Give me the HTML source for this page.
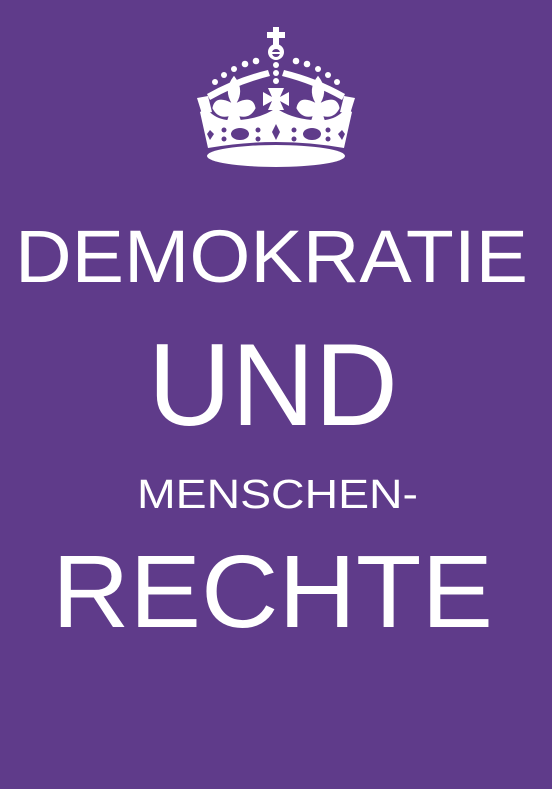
<!DOCTYPE html>
<html><head><meta charset="utf-8"><style>
html,body{margin:0;padding:0;background:#5f3b8a;}
svg{display:block}
</style></head><body>
<svg width="552" height="789" viewBox="0 0 552 789" xmlns="http://www.w3.org/2000/svg">
<rect width="552" height="789" fill="#5f3b8a"/>
<g fill="#fff">
  <rect x="273" y="27" width="6" height="20"/>
  <rect x="267" y="32" width="18" height="6"/>
  <circle cx="276" cy="52" r="8"/>
  <circle cx="276" cy="53" r="4" fill="#5f3b8a"/>
  <rect x="271" y="52" width="10" height="2"/>
  <circle cx="276" cy="65" r="3"/><circle cx="276" cy="73" r="3"/><circle cx="276" cy="81" r="3"/>
  <path d="M207 94 Q235 78 268 70 L270 76 Q238 84 210 100 Z"/>
  <path d="M345 94 Q317 78 284 70 L282 76 Q314 84 342 100 Z"/>
  <circle cx="215" cy="82" r="3"/><circle cx="224" cy="75" r="3"/><circle cx="234" cy="69" r="3"/><circle cx="245" cy="64" r="3.3"/><circle cx="256" cy="61" r="3.3"/>
  <circle cx="337" cy="82" r="3"/><circle cx="328" cy="75" r="3"/><circle cx="318" cy="69" r="3"/><circle cx="307" cy="64" r="3.3"/><circle cx="296" cy="61" r="3.3"/>
  <path d="M268 88 L284 88 L280 97 L289 92 L289 106 L280 101 L284 110 L268 110 L272 101 L263 106 L263 92 L272 97 Z"/>
  <g transform="translate(234 100) scale(1.35) translate(-234 -100)">
  <path d="M234 82 Q226 92 232 102 Q220 96 218 106 Q222 114 230 112 L228 118 L240 118 L238 112 Q246 114 250 106 Q248 96 236 102 Q242 92 234 82 Z"/>
  </g>
  <g transform="translate(318 100) scale(1.35) translate(-318 -100)">
  <path d="M318 82 Q310 92 316 102 Q304 96 302 106 Q306 114 314 112 L312 118 L324 118 L322 112 Q330 114 334 106 Q332 96 320 102 Q326 92 318 82 Z"/>
  </g>
  <path d="M197 98 L208 96 L212 112 L202 114 Z"/>
  <path d="M355 98 L344 96 L340 112 L350 114 Z"/>
  <path d="M200 112 Q205 108 212 114 Q222 122 240 120 Q262 118 276 108 Q290 118 312 120 Q330 122 340 114 Q347 108 352 112 L344 148 Q276 136 208 148 Z"/>
  <ellipse cx="276" cy="156" rx="69" ry="11"/>
</g>
<g fill="#5f3b8a">
  <ellipse cx="240" cy="134" rx="9" ry="6"/>
  <ellipse cx="312" cy="134" rx="9" ry="6"/>
  <path d="M276 124 L280 132 L276 140 L272 132 Z"/>
  <circle cx="224" cy="130" r="2.5"/><circle cx="224" cy="139" r="2.5"/>
  <circle cx="258" cy="130" r="2.5"/><circle cx="258" cy="139" r="2.5"/>
  <circle cx="294" cy="130" r="2.5"/><circle cx="294" cy="139" r="2.5"/>
  <circle cx="328" cy="130" r="2.5"/><circle cx="328" cy="139" r="2.5"/>
  <path d="M210 130 L214 134 L210 140 L207 134 Z"/>
  <path d="M342 130 L345 134 L342 140 L338 134 Z"/>
</g>
<g fill="#fff" font-family="Liberation Sans, sans-serif">
  <text x="15" y="282" font-size="74" textLength="513" lengthAdjust="spacingAndGlyphs">DEMOKRATIE</text>
  <text x="148" y="425" font-size="117" textLength="250" lengthAdjust="spacingAndGlyphs">UND</text>
  <text x="137" y="508" font-size="41" textLength="281" lengthAdjust="spacingAndGlyphs">MENSCHEN-</text>
  <text x="52" y="627" font-size="103" textLength="441" lengthAdjust="spacingAndGlyphs">RECHTE</text>
</g>
</svg>
</body></html>
